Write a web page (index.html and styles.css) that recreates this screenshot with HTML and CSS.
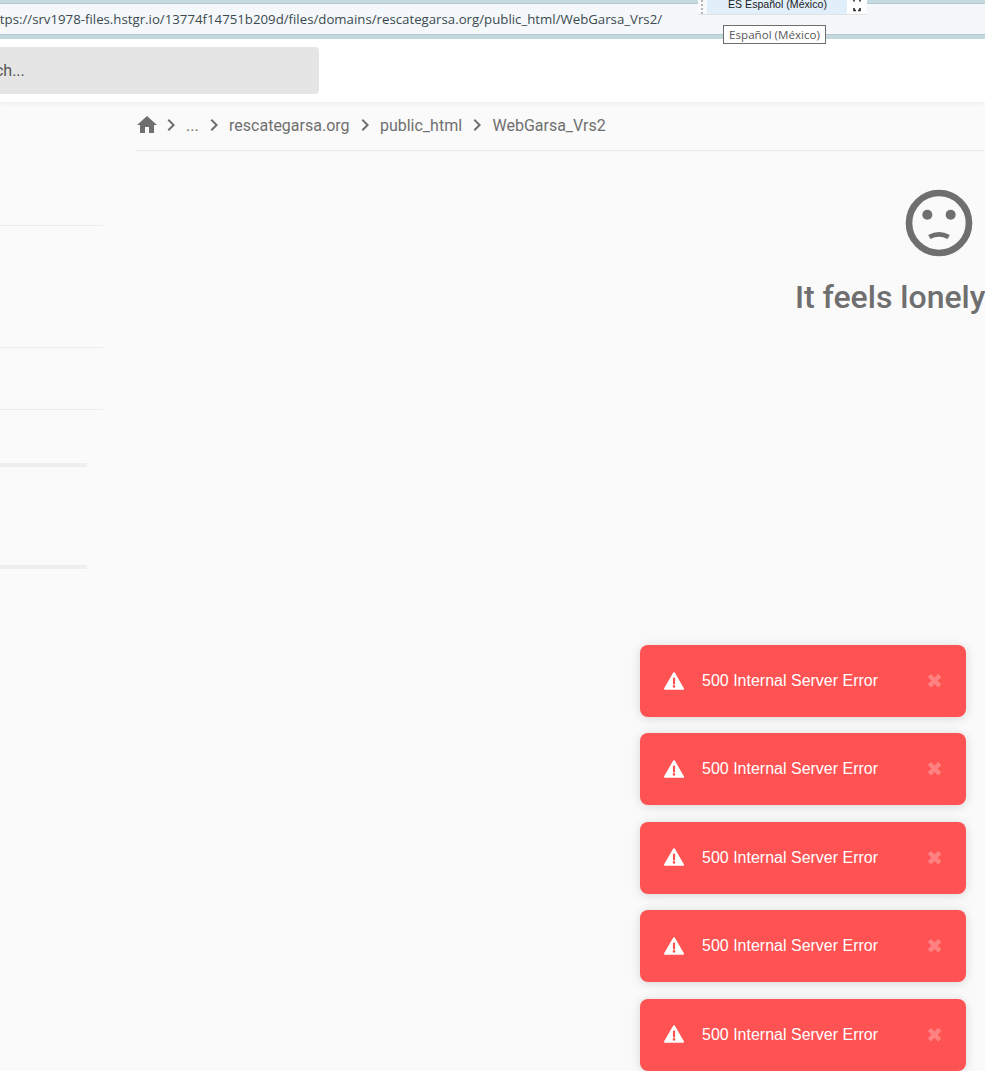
FILE: index.html
```html
<!DOCTYPE html>
<html lang="en">
<head>
<meta charset="utf-8">
<title>File Browser</title>
<link rel="stylesheet" href="styles.css">
</head>
<body>
<div class="browser-bar">
  <div class="address"><span class="url">https://srv1978-files.hstgr.io/13774f14751b209d/files/domains/rescategarsa.org/public_html/WebGarsa_Vrs2/</span></div>
</div>
<header class="topbar">
  <div class="search"><span class="search-text">Search...</span></div>
</header>
<div class="layout">
  <aside class="sidebar">
    <div class="rule rule-a"></div>
    <div class="rule rule-b"></div>
    <div class="rule rule-c"></div>
    <div class="meter meter-a"></div>
    <div class="meter meter-b"></div>
  </aside>
  <main class="content">
    <nav class="crumbs">
      <svg class="home" viewBox="0 0 24 24"><path d="M10 20v-6h4v6h5v-8h3L12 3 2 12h3v8z"/></svg>
      <svg class="chev" viewBox="0 0 24 24"><path d="M10 6 8.59 7.41 13.17 12l-4.58 4.59L10 18l6-6z"/></svg>
      <span>...</span>
      <svg class="chev" viewBox="0 0 24 24"><path d="M10 6 8.59 7.41 13.17 12l-4.58 4.59L10 18l6-6z"/></svg>
      <span>rescategarsa.org</span>
      <svg class="chev" viewBox="0 0 24 24"><path d="M10 6 8.59 7.41 13.17 12l-4.58 4.59L10 18l6-6z"/></svg>
      <span>public_html</span>
      <svg class="chev" viewBox="0 0 24 24"><path d="M10 6 8.59 7.41 13.17 12l-4.58 4.59L10 18l6-6z"/></svg>
      <span>WebGarsa_Vrs2</span>
    </nav>
    <section class="empty">
      <svg class="sad" viewBox="0 0 24 24">
        <circle cx="12" cy="12" r="9" class="sad-ring"/>
        <circle cx="8.5" cy="9.5" r="1.5" class="sad-eye"/>
        <circle cx="15.5" cy="9.5" r="1.5" class="sad-eye"/>
        <path d="M9.1 16.2Q12 14.6 14.9 16.2" class="sad-mouth"/>
      </svg>
      <h2 class="empty-title">It feels lonely here...</h2>
    </section>
  </main>
</div>

<div class="langbar">
  <span class="grip"></span>
  <span class="lang">ES Español (México)</span>
  <span class="lang-end"><svg class="lang-icon" viewBox="0 0 8 12"><path d="M1 0v1.5M7 0v1.5M1 8v2.5h2M7 8v2.5H5"/></svg></span>
</div>
<div class="lang-tip">Español (México)</div>

<div class="toasts">
  <div class="toast">
    <svg class="warn" viewBox="0 0 20 18"><path class="warn-tri" d="M10 1.2 19 16.8H1z"/><rect x="8.9" y="5.6" width="2.2" height="6.8" class="warn-mark"/><circle cx="10" cy="14.4" r="1.3" class="warn-mark"/></svg>
    <span class="toast-msg">500 Internal Server Error</span>
    <span class="toast-x">✖</span>
  </div>
  <div class="toast">
    <svg class="warn" viewBox="0 0 20 18"><path class="warn-tri" d="M10 1.2 19 16.8H1z"/><rect x="8.9" y="5.6" width="2.2" height="6.8" class="warn-mark"/><circle cx="10" cy="14.4" r="1.3" class="warn-mark"/></svg>
    <span class="toast-msg">500 Internal Server Error</span>
    <span class="toast-x">✖</span>
  </div>
  <div class="toast">
    <svg class="warn" viewBox="0 0 20 18"><path class="warn-tri" d="M10 1.2 19 16.8H1z"/><rect x="8.9" y="5.6" width="2.2" height="6.8" class="warn-mark"/><circle cx="10" cy="14.4" r="1.3" class="warn-mark"/></svg>
    <span class="toast-msg">500 Internal Server Error</span>
    <span class="toast-x">✖</span>
  </div>
  <div class="toast">
    <svg class="warn" viewBox="0 0 20 18"><path class="warn-tri" d="M10 1.2 19 16.8H1z"/><rect x="8.9" y="5.6" width="2.2" height="6.8" class="warn-mark"/><circle cx="10" cy="14.4" r="1.3" class="warn-mark"/></svg>
    <span class="toast-msg">500 Internal Server Error</span>
    <span class="toast-x">✖</span>
  </div>
  <div class="toast">
    <svg class="warn" viewBox="0 0 20 18"><path class="warn-tri" d="M10 1.2 19 16.8H1z"/><rect x="8.9" y="5.6" width="2.2" height="6.8" class="warn-mark"/><circle cx="10" cy="14.4" r="1.3" class="warn-mark"/></svg>
    <span class="toast-msg">500 Internal Server Error</span>
    <span class="toast-x">✖</span>
  </div>
</div>
</body>
</html>
```
FILE: styles.css
```css
* { box-sizing: border-box; }
html, body { margin: 0; height: 100%; overflow: hidden; }
body {
  background: #fafafa;
  font-family: Roboto, "Liberation Sans", sans-serif;
  color: #6f6f6f;
  position: relative;
}

.browser-bar {
  height: 39px;
  background: #c5dae1;
  padding: 3px 0 4px;
}
.address {
  height: 32px;
  background: #f4f8fa;
  border-top: 1px solid #b9c6cb;
  border-bottom: 1px solid #b9c6cb;
  display: flex;
  align-items: center;
  overflow: hidden;
  white-space: nowrap;
}
.url {
  margin-left: -13px;
  font: 13.24px "Open Sans", "Noto Sans", sans-serif;
  color: #3c4a50;
}

.topbar {
  height: 63px;
  background: #fff;
  padding-top: 8px;
  box-shadow: 0 1px 6px rgba(0, 0, 0, .07);
  position: relative;
}
.search {
  width: 319px;
  height: 47px;
  background: #e5e5e5;
  border-radius: 0 4px 4px 0;
  display: flex;
  align-items: center;
  overflow: hidden;
}
.search-text {
  margin-left: -37px;
  font-size: 16px;
  color: #555;
  white-space: nowrap;
}

.layout { display: flex; }
.sidebar {
  width: 136px;
  flex: none;
  display: flex;
  flex-direction: column;
  align-items: flex-start;
}
.rule { width: 103px; height: 1px; background: #ececec; }
.rule-a { margin-top: 123px; }
.rule-b { margin-top: 121px; }
.rule-c { margin-top: 61px; }
.meter { width: 87px; height: 4px; background: #eee; }
.meter-a { margin-top: 53px; }
.meter-b { margin-top: 98px; }

.content { width: 1606px; flex: none; }
.crumbs {
  height: 49px;
  padding-bottom: 2px;
  border-bottom: 1px solid #e9e9e9;
  display: flex;
  align-items: center;
  font-size: 16px;
  color: #6f6f6f;
}
.crumbs svg { fill: #6f6f6f; flex: none; }
.home { width: 24px; height: 24px; margin-left: -1px; }
.chev { width: 24px; height: 24px; margin: 0 3px; }
.home + .chev { margin-left: 0; }
.chev + span + .chev { margin-left: 3.4px; }

.empty {
  display: flex;
  flex-direction: column;
  align-items: center;
  padding-top: 32px;
}
.sad { width: 80px; height: 80px; display: block; }
.sad-ring { fill: none; stroke: #6f6f6f; stroke-width: 2; }
.sad-eye { fill: #6f6f6f; }
.sad-mouth { fill: none; stroke: #6f6f6f; stroke-width: 1.4; }
.empty-title {
  margin: 12px 0 0;
  font-size: 32px;
  line-height: 44px;
  font-weight: 500;
  color: #6f6f6f;
  white-space: nowrap;
}

.langbar {
  position: absolute;
  left: 698px;
  top: 0;
  width: 169px;
  height: 15px;
  background: #f7f9fa;
  border-bottom: 1px solid #dfe3e5;
  display: flex;
}
.grip {
  border-left: 2px dotted #b5b5b5;
  margin-left: 3px;
  flex: none;
  width: 6px;
}
.lang {
  width: 140px;
  flex: none;
  background: #e1effb;
  font: 10.6px/8px "Liberation Sans", sans-serif;
  color: #1a1a1a;
  padding-left: 21px;
  white-space: nowrap;
  overflow: hidden;
}
.lang-end { flex: 1; background: #fff; display: flex; justify-content: center; }
.lang-icon { width: 8px; height: 12px; fill: none; stroke: #2a2a2a; stroke-width: 1.6; }
.lang-tip {
  position: absolute;
  left: 723px;
  top: 25px;
  width: 103px;
  height: 19px;
  background: #fff;
  border: 1px solid #6d6d6d;
  font: 11.6px/17px "Open Sans", sans-serif;
  color: #575757;
  text-align: center;
  white-space: nowrap;
}

.toasts {
  position: absolute;
  right: 19px;
  bottom: 0.4px;
  width: 326px;
  display: flex;
  flex-direction: column;
  gap: 16.4px;
}
.toast {
  height: 72px;
  background: #ff5252;
  border-radius: 8px;
  box-shadow: 0 1px 10px rgba(0, 0, 0, .1), 0 2px 15px rgba(0, 0, 0, .05);
  display: flex;
  align-items: center;
  padding: 0 24px;
  color: #fff;
}
.warn { width: 20px; height: 18px; flex: none; margin-top: -1px; overflow: visible; }
.warn-tri { fill: #fff; stroke: #fff; stroke-width: 2; stroke-linejoin: round; }
.warn-mark { fill: #ff5252; }
.toast-msg {
  margin-left: 18px;
  font: 16px "Liberation Sans", Arial, sans-serif;
  white-space: nowrap;
  flex: 1;
}
.toast-x {
  font: 700 20px/1 "DejaVu Sans", sans-serif;
  color: rgba(255, 255, 255, .3);
  margin-right: -1px;
}
```
